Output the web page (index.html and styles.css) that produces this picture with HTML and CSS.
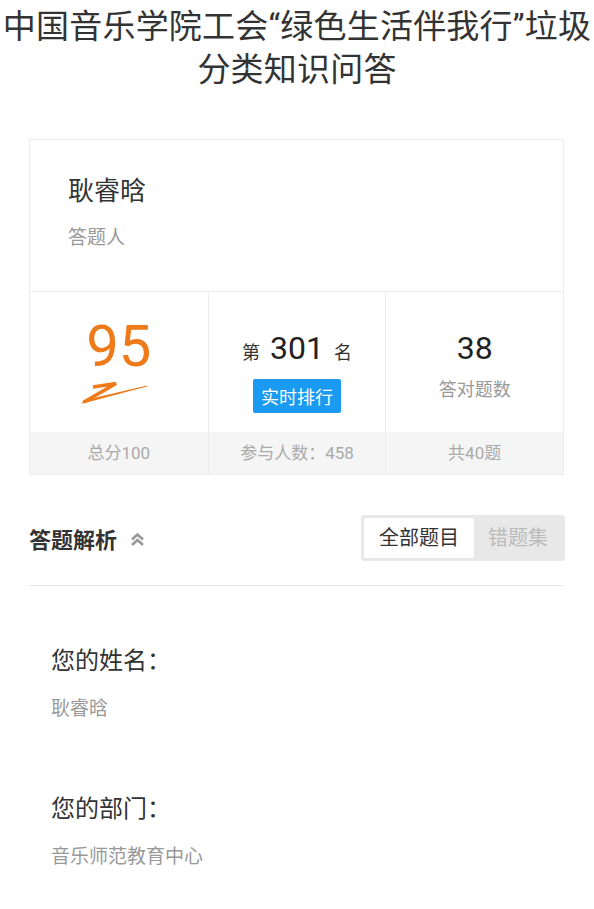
FILE: index.html
```html
<!DOCTYPE html>
<html lang="zh-CN">
  <head>
    <meta charset="UTF-8" />
    <meta name="viewport" content="width=device-width, initial-scale=1.0" />
    <title>答题结果</title>
    <link rel="stylesheet" href="styles.css">
  </head>
  <body>
    <!-- Page title -->
    <h1 class="page-title">中国音乐学院工会“绿色生活伴我行”垃圾分类知识问答</h1>

    <div class="result">
      <!-- Score card -->
      <div class="score-card">
        <div class="person">
          <div class="person-name">耿睿晗</div>
          <div class="person-label">答题人</div>
        </div>

        <div class="stats">
          <div class="stat">
            <div class="stat-main">
              <div class="score">95</div>
              <svg class="score-mark" width="68" height="24" viewBox="0 0 68 24">
                <polyline points="12,6 35,2.5 3,21" fill="none" stroke="#ef7a1a" stroke-width="3.5" stroke-linejoin="miter" />
                <path d="M2 19.5 L66 4.5 L66 5.6 L1 22.8 Z" fill="#ef7a1a" />
              </svg>
            </div>
            <div class="stat-foot">总分100</div>
          </div>

          <div class="stat">
            <div class="stat-main">
              <div class="rank">
                <span class="rank-word">第</span>
                <span class="big-num">301</span>
                <span class="rank-word">名</span>
              </div>
              <button class="rank-btn">实时排行</button>
            </div>
            <div class="stat-foot">参与人数：458</div>
          </div>

          <div class="stat">
            <div class="stat-main">
              <div class="big-num">38</div>
              <div class="stat-label">答对题数</div>
            </div>
            <div class="stat-foot">共40题</div>
          </div>
        </div>
      </div>

      <!-- Answer review header -->
      <div class="review-head">
        <div class="review-title">
          答题解析
          <svg class="chevron" width="15" height="15" viewBox="0 0 15 15">
            <path d="M2 7.5 L7.5 2.5 L13 7.5 M2 13 L7.5 8 L13 13" fill="none" stroke="#999" stroke-width="2.6" />
          </svg>
        </div>
        <div class="toggle">
          <span class="toggle-item active">全部题目</span>
          <span class="toggle-item">错题集</span>
        </div>
      </div>

      <!-- Questions -->
      <div class="questions">
        <div class="question">
          <div class="question-title">您的姓名：</div>
          <div class="question-answer">耿睿晗</div>
        </div>
        <div class="question">
          <div class="question-title">您的部门：</div>
          <div class="question-answer">音乐师范教育中心</div>
        </div>
      </div>
    </div>
  </body>
</html>
```

FILE: styles.css
```css
body {
  font-family: Roboto, "Noto Sans CJK SC", sans-serif;
  background: #fff;
  color: #333;
  margin: 0;
  padding: 0;
}
/* Title */
.page-title {
  margin: 5px 0 0;
  font-size: 33px;
  font-weight: normal;
  line-height: 43px;
  text-align: center;
  color: #333;
  letter-spacing: 0.2px;
}
.result {
  margin: 48px 30px 0 29px;
}
/* Score card */
.score-card {
  border: 1px solid #ececec;
}
.person {
  padding: 33px 38px 39px;
}
.person-name {
  font-size: 26px;
  line-height: 36px;
  color: #333;
}
.person-label {
  margin-top: 15px;
  font-size: 19px;
  line-height: 28px;
  color: #999;
}
.stats {
  display: grid;
  grid-template-columns: 1fr 1fr 1fr;
  border-top: 1px solid #ececec;
}
.stat {
  display: flex;
  flex-direction: column;
  border-left: 1px solid #ececec;
}
.stat:first-child {
  border-left: none;
}
.stat-main {
  height: 140px;
  display: flex;
  flex-direction: column;
  align-items: center;
}
.score {
  margin-top: 22px;
  font-size: 58px;
  line-height: 64px;
  color: #ef7a1a;
}
.score-mark {
  margin-top: 3px;
  margin-right: 8px;
}
.rank {
  margin-top: 36px;
  display: flex;
  align-items: baseline;
  gap: 10px;
  line-height: 40px;
}
.rank-word {
  font-size: 18px;
  color: #333;
}
.big-num {
  font-size: 32px;
  line-height: 40px;
  color: #222;
}
.stat > .stat-main > .big-num {
  margin-top: 36px;
}
.rank-btn {
  margin-top: 6px;
  padding: 0 8px;
  height: 34px;
  border: none;
  border-radius: 2px;
  background: #1a9af0;
  color: #fff;
  font-family: inherit;
  font-size: 18px;
}
.stat-label {
  margin-top: 8px;
  font-size: 18px;
  line-height: 28px;
  color: #999;
}
.stat-foot {
  height: 42px;
  line-height: 42px;
  background: #f5f5f5;
  text-align: center;
  font-size: 17px;
  color: #aaa;
}
/* Review header */
.review-head {
  margin-top: 40px;
  padding-bottom: 24px;
  border-bottom: 1px solid #e8e8e8;
  display: flex;
  justify-content: space-between;
  align-items: center;
}
.review-title {
  display: flex;
  align-items: center;
  gap: 13px;
  font-size: 22px;
  font-weight: bold;
  color: #333;
}
.chevron {
  margin-top: 2px;
}
.toggle {
  display: flex;
  margin-right: -1px;
  padding: 3px;
  border-radius: 3px;
  background: #e8e8e8;
}
.toggle-item {
  height: 40px;
  line-height: 40px;
  padding: 0 14px;
  font-size: 20px;
  color: #bbb;
}
.toggle-item.active {
  padding: 0 15px;
  background: #fff;
  border-radius: 2px;
  color: #333;
}
/* Questions */
.questions {
  padding: 59px 22px 0;
}
.question {
  margin-bottom: 70px;
}
.question-title {
  font-size: 24px;
  line-height: 32px;
  color: #333;
}
.question-answer {
  margin-top: 18px;
  font-size: 19px;
  line-height: 28px;
  color: #999;
}
```
